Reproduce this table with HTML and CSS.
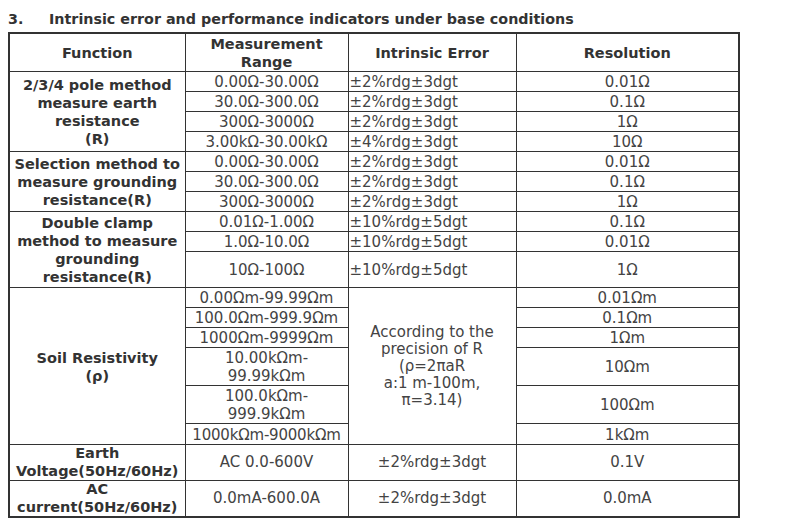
FILE: index.html
```html
<!DOCTYPE html>
<html>
<head>
<meta charset="utf-8">
<link rel="stylesheet" href="styles.css">
</head>
<body>
<h3 class="title"><span class="num">3.</span>Intrinsic error and performance indicators under base conditions</h3>
<table class="spec">
  <colgroup>
    <col class="c1"><col class="c2"><col class="c3"><col class="c4">
  </colgroup>
  <tr class="head">
    <th>Function</th>
    <th>Measurement<br>Range</th>
    <th>Intrinsic Error</th>
    <th>Resolution</th>
  </tr>
  <tr>
    <td class="fn" rowspan="4">2/3/4 pole method<br>measure earth<br>resistance<br>(R)</td>
    <td>0.00Ω-30.00Ω</td><td class="err">±2%rdg±3dgt</td><td>0.01Ω</td>
  </tr>
  <tr><td>30.0Ω-300.0Ω</td><td class="err">±2%rdg±3dgt</td><td>0.1Ω</td></tr>
  <tr><td>300Ω-3000Ω</td><td class="err">±2%rdg±3dgt</td><td>1Ω</td></tr>
  <tr><td>3.00kΩ-30.00kΩ</td><td class="err">±4%rdg±3dgt</td><td>10Ω</td></tr>
  <tr>
    <td class="fn" rowspan="3">Selection method to<br>measure grounding<br>resistance(R)</td>
    <td>0.00Ω-30.00Ω</td><td class="err">±2%rdg±3dgt</td><td>0.01Ω</td>
  </tr>
  <tr><td>30.0Ω-300.0Ω</td><td class="err">±2%rdg±3dgt</td><td>0.1Ω</td></tr>
  <tr><td>300Ω-3000Ω</td><td class="err">±2%rdg±3dgt</td><td>1Ω</td></tr>
  <tr>
    <td class="fn" rowspan="3">Double clamp<br>method to measure<br>grounding<br>resistance(R)</td>
    <td>0.01Ω-1.00Ω</td><td class="err">±10%rdg±5dgt</td><td>0.1Ω</td>
  </tr>
  <tr><td>1.0Ω-10.0Ω</td><td class="err">±10%rdg±5dgt</td><td>0.01Ω</td></tr>
  <tr class="h36"><td>10Ω-100Ω</td><td class="err">±10%rdg±5dgt</td><td>1Ω</td></tr>
  <tr class="h18">
    <td class="fn" rowspan="6">Soil Resistivity<br>(ρ)</td>
    <td>0.00Ωm-99.99Ωm</td>
    <td class="acc" rowspan="6">According to the<br>precision of R<br>(ρ=2πaR<br>a:1 m-100m,<br>π=3.14)</td>
    <td>0.01Ωm</td>
  </tr>
  <tr><td>100.0Ωm-999.9Ωm</td><td>0.1Ωm</td></tr>
  <tr><td>1000Ωm-9999Ωm</td><td>1Ωm</td></tr>
  <tr><td>10.00kΩm-<br>99.99kΩm</td><td>10Ωm</td></tr>
  <tr><td>100.0kΩm-<br>999.9kΩm</td><td>100Ωm</td></tr>
  <tr class="h21"><td class="tight">1000kΩm-9000kΩm</td><td>1kΩm</td></tr>
  <tr class="short">
    <td class="fn">Earth<br>Voltage(50Hz/60Hz)</td>
    <td>AC 0.0-600V</td><td>±2%rdg±3dgt</td><td>0.1V</td>
  </tr>
  <tr class="short">
    <td class="fn">AC<br>current(50Hz/60Hz)</td>
    <td>0.0mA-600.0A</td><td>±2%rdg±3dgt</td><td>0.0mA</td>
  </tr>
</table>
</body>
</html>
```

FILE: styles.css
```css
html, body {
  margin: 0;
  padding: 0;
  background: #ffffff;
}
body {
  padding: 8px;
  font-family: "DejaVu Sans", Verdana, sans-serif;
  color: #3a3a3a;
}
.title {
  margin: 3px 0 4px 0;
  font-size: 14.3px;
  line-height: 17px;
  font-weight: bold;
  color: #333333;
}
.num {
  display: inline-block;
  width: 41px;
}
.spec {
  border-collapse: collapse;
  width: 731px;
  table-layout: fixed;
  border: 2px solid #333333;
}
.c1 { width: 176px; }
.c2 { width: 163px; }
.c3 { width: 168px; }
.c4 { width: 223px; }
.spec th,
.spec td {
  border: 1px solid #333333;
  padding: 1px 0 0 0;
  font-size: 15px;
  line-height: 18px;
  text-align: center;
  vertical-align: middle;
  font-weight: normal;
  color: #444444;
  white-space: nowrap;
  overflow: hidden;
}
.spec th,
.spec td.fn {
  font-weight: bold;
  font-size: 14.5px;
  color: #333333;
}
.spec td.err {
  text-align: left;
  padding-left: 1px;
}
.spec td.acc {
  line-height: 17px;
}
.spec td.tight {
  letter-spacing: -0.2px;
}
.spec tr.short td {
  line-height: 17.5px;
  padding-top: 0;
}
.h36 { height: 36px; }
.h18 { height: 18px; }
.h21 { height: 21px; }
```
